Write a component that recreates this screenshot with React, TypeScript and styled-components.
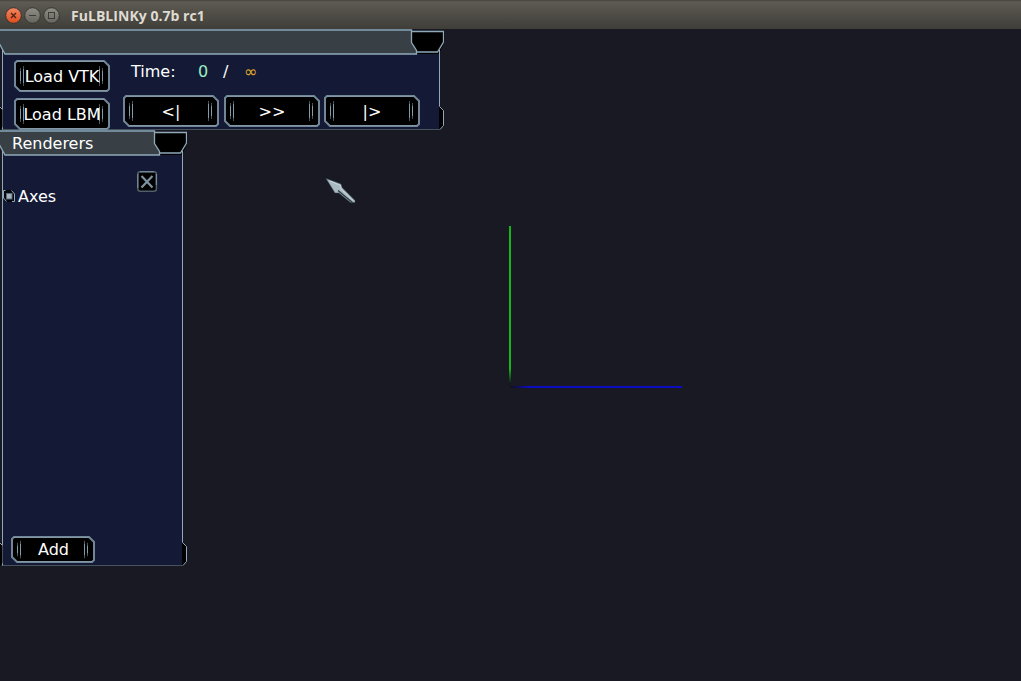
import React from "react";
import styled, { createGlobalStyle } from "styled-components";

const GlobalStyle = createGlobalStyle`
  *, *::before, *::after { box-sizing: border-box; }
  html, body { margin: 0; height: 100%; overflow: hidden; background: #191923; }
  body { font-family: "DejaVu Sans", sans-serif; font-size: 16px; color: #fff; }
`;

const LINE = "#8fa9b8";
const EDGE = "#718696";

const Window = styled.div`
  width: 1021px;
  height: 681px;
  display: flex;
  flex-direction: column;
  overflow: hidden;
`;

const WindowBar = styled.header`
  height: 29px;
  flex: none;
  display: flex;
  align-items: center;
  padding: 2px 0 0 5px;
  background: linear-gradient(#45443f 0, #5d5b52 2px, #55534b 30%, #3f3e39 100%);
`;

const WindowButtons = styled.div`
  display: flex;
  gap: 2px;
`;

const WindowTitle = styled.h1`
  margin: 0 0 0 11px;
  font: 700 14px/20px "Open Sans", sans-serif;
  letter-spacing: 0.04px;
  color: #dfdbd2;
`;

const Scene = styled.main`
  position: relative;
  flex: 1;
  background: #191923;
  overflow: hidden;
`;

const AxesDrawing = styled.svg`
  position: absolute;
  left: 500px;
  top: 190px;
`;

const Pointer = styled.svg`
  position: absolute;
  left: 325px;
  top: 149px;
`;

const PanelBox = styled.section<{ $top: number; $width: number; $height: number }>`
  position: absolute;
  left: 0;
  top: ${(p) => p.$top}px;
  width: ${(p) => p.$width}px;
  height: ${(p) => p.$height}px;
  display: flex;
  flex-direction: column;
`;

const PanelHead = styled.div`
  position: relative;
  height: 26px;
  flex: none;
  padding-left: 12px;
  line-height: 27px;
`;

const PanelBody = styled.div`
  position: relative;
  flex: 1;
  min-height: 0;
  margin: 0 4px 0 2px;
  border: solid ${LINE};
  border-width: 0 1px 1px;
  border-bottom-color: #46535d;
  background: #141a35;
`;

const Ornament = styled.svg`
  position: absolute;
  left: 0;
  top: 0;
`;

const CornerOrnament = styled.svg<{ $side: "left" | "right" }>`
  position: absolute;
  bottom: -1px;
  ${(p) => p.$side}: ${(p) => (p.$side === "left" ? -3 : -5)}px;
`;

const Label = styled.span`
  position: relative;
`;

const ButtonBox = styled.button<{ $width: number; $height: number; $padding: string }>`
  position: relative;
  flex: none;
  display: flex;
  align-items: center;
  justify-content: center;
  width: ${(p) => p.$width}px;
  height: ${(p) => p.$height}px;
  padding: ${(p) => p.$padding};
  border: 0;
  background: none;
  color: #fff;
  font: inherit;
  line-height: 20px;
  white-space: nowrap;
`;

const ControlLayout = styled.div`
  display: flex;
  gap: 13px;
  padding: 5px 0 0 11px;
`;

const LoadColumn = styled.div`
  display: flex;
  flex-direction: column;
  gap: 6px;
`;

const PlayColumn = styled.div`
  display: flex;
  flex-direction: column;
`;

const TimeRow = styled.div`
  display: flex;
  height: 35px;
  padding: 2px 0 0 8px;
  line-height: 20px;
`;

const TimeCell = styled.span<{ $width?: number; $color?: string }>`
  width: ${(p) => (p.$width ? `${p.$width}px` : "auto")};
  color: ${(p) => p.$color ?? "#fff"};
`;

const PlayRow = styled.div`
  display: grid;
  grid-template-columns: 101px 100px 96px;
`;

const RendererLayout = styled.div`
  height: 100%;
  display: flex;
  flex-direction: column;
  padding: 15px 25px 2px 0;
`;

const CloseRow = styled.div`
  display: flex;
  justify-content: flex-end;
  height: 15px;
`;

const RendererItem = styled.div`
  display: flex;
  align-items: center;
  gap: 3px;
  height: 20px;
`;

const AddRow = styled.div`
  margin-top: auto;
  padding-left: 8px;
`;

const CloseIcon = styled.svg`
  flex: none;
  overflow: visible;
`;

function OrnateButton({ width: w, height: h, padding = "1px 0 0", children }: {
  width: number;
  height: number;
  padding?: string;
  children: React.ReactNode;
}) {
  const mid = h / 2;
  const grips = [
    { x: 6.5, r: h / 4 - 1 },
    { x: 9.5, r: h / 4 + 1 },
    { x: w - 10.5, r: h / 4 + 1 },
    { x: w - 7.5, r: h / 4 - 1 },
  ];
  return (
    <ButtonBox $width={w} $height={h} $padding={padding}>
      <Ornament width={w} height={h}>
        <path
          d={`M3 1H${w - 6}L${w - 1} 6V${h - 3}L${w - 3} ${h - 1}H6L1 ${h - 6}V3Z`}
          fill="#000"
          stroke={EDGE}
          strokeWidth="2"
        />
        <path d={`M3 1.5H${w - 6}M6 ${h - 1.5}H${w - 3}`} stroke="#8398a6" />
        {grips.map(({ x, r }) => (
          <g key={x} stroke="#9db9ca">
            <path d={`M${x} ${mid - r - 1}V${mid + r + 1}`} opacity=".45" />
            <path d={`M${x} ${mid - r + 2}V${mid + r - 2}`} opacity=".7" />
          </g>
        ))}
      </Ornament>
      <Label>{children}</Label>
    </ButtonBox>
  );
}

function Panel({ top, width, height, title, children }: {
  top: number;
  width: number;
  height: number;
  title?: string;
  children: React.ReactNode;
}) {
  const t = width - 33;
  return (
    <PanelBox $top={top} $width={width} $height={height}>
      <PanelHead>
        <Ornament width={width} height="26">
          <path d={`M2 20H${width - 4}V26H2Z`} fill="#141a35" />
          <path d="M2.5 20V26" stroke={LINE} />
          <path d={`M${t} 2H${width}V14L${width - 5} 25H${t}Z`} fill="#000" />
          <path d={`M${width - 4.5} 21V26`} stroke={LINE} />
          <path
            d={`M${t} 2.5H${width - 0.5}V13L${width - 6.5} 23H${t + 4}`}
            fill="none"
            stroke={LINE}
            strokeWidth="1.3"
          />
          <path d={`M-2 1H${t + 0.5}V13.5L${t + 5.5} 21.5V25H5L-1 14Z`} fill="#384046" stroke={LINE} strokeWidth="1.3" />
          <path d={`M0 1H${t}`} stroke="#718b9a" strokeWidth="2" />
        </Ornament>
        <Label>{title}</Label>
      </PanelHead>
      <PanelBody>
        {children}
        <CornerOrnament $side="left" width="3" height="24">
          <path d="M0 0L2.5 3V21L0 24Z" fill="#000" />
          <path d="M0 1L2.5 3.5" stroke={LINE} />
        </CornerOrnament>
        <CornerOrnament $side="right" width="5" height="24">
          <path d="M0 0L4.5 4V20L1 23.5H0Z" fill="#000" />
          <path d="M.5 .5L4.5 4.5V19.5L1 23.5" fill="none" stroke={LINE} />
        </CornerOrnament>
      </PanelBody>
    </PanelBox>
  );
}

function TitleButton({ kind }: { kind: "close" | "minimize" | "maximize" }) {
  const close = kind === "close";
  const id = `${kind}-fill`;
  return (
    <svg width="17" height="17" role="img" aria-label={kind}>
      <defs>
        <linearGradient id={id} x2="0" y2="1">
          <stop stopColor={close ? "#f58662" : "#918f87"} />
          <stop offset="1" stopColor={close ? "#df4d1c" : "#65645d"} />
        </linearGradient>
      </defs>
      <circle cx="8.5" cy="8.5" r="7.8" fill={`url(#${id})`} stroke="#33322e" strokeWidth=".9" />
      {close && <path d="M6 6L11 11M11 6L6 11" stroke="#4a2114" strokeWidth="1.3" />}
      {kind === "minimize" && <path d="M5 8.5H12" stroke="#3c3b37" />}
      {kind === "maximize" && <rect x="5.5" y="5.5" width="6" height="6" fill="none" stroke="#3c3b37" />}
    </svg>
  );
}

function CloseBox() {
  return (
    <CloseIcon width="20" height="22">
      <rect x=".8" y=".8" width="18.6" height="19.4" rx="2.5" fill="#000" stroke="#505e69" strokeWidth="1.5" />
      <path d="M3 .8H17M.8 3V17M19.3 3V14" stroke="#8096a4" />
      <path d="M4.5 5L15.5 16.5M15.5 5L4.5 16.5" stroke="#7d95a4" strokeWidth="2.1" />
    </CloseIcon>
  );
}

function RadioMark() {
  return (
    <svg width="12" height="12">
      <path d="M2 0H9L11 3V12H3L1 9V1Z" fill="#05070d" />
      <path d="M2.5 .5H.5V8L3.5 11.5M9 11.5H11.5V4L8.5 .5" fill="none" stroke={LINE} />
      <rect x="3.5" y="3.5" width="5.5" height="5.5" fill="#a5b2bb" stroke="#586b7a" />
    </svg>
  );
}

export default function App() {
  return (
    <Window>
      <GlobalStyle />
      <WindowBar>
        <WindowButtons>
          <TitleButton kind="close" />
          <TitleButton kind="minimize" />
          <TitleButton kind="maximize" />
        </WindowButtons>
        <WindowTitle>FuLBLINKy 0.7b rc1</WindowTitle>
      </WindowBar>
      <Scene>
        <AxesDrawing width="190" height="180">
          <defs>
            <linearGradient id="green" gradientUnits="userSpaceOnUse" x1="0" y1="0" x2="0" y2="168">
              <stop offset=".89" stopColor="#16b61b" />
              <stop offset=".98" stopColor="#10181a" />
            </linearGradient>
            <linearGradient id="blue">
              <stop stopColor="#10101a" />
              <stop offset=".11" stopColor="#0c0cc0" />
            </linearGradient>
          </defs>
          <rect x="10" y="167" width="172" height="2" fill="url(#blue)" />
          <rect x="9" y="7" width="2" height="160" fill="url(#green)" />
        </AxesDrawing>
        <Panel top={0} width={444} height={101}>
          <ControlLayout>
            <LoadColumn>
              <OrnateButton width={96} height={32}>Load VTK</OrnateButton>
              <OrnateButton width={96} height={32}>Load LBM</OrnateButton>
            </LoadColumn>
            <PlayColumn>
              <TimeRow>
                <TimeCell $width={67}>Time:</TimeCell>
                <TimeCell $width={25} $color="#9af0c6">0</TimeCell>
                <TimeCell $width={21}>/</TimeCell>
                <TimeCell $color="#e0a92e">∞</TimeCell>
              </TimeRow>
              <PlayRow>
                <OrnateButton width={96} height={32}>&lt;|</OrnateButton>
                <OrnateButton width={96} height={32}>&gt;&gt;</OrnateButton>
                <OrnateButton width={96} height={32}>|&gt;</OrnateButton>
              </PlayRow>
            </PlayColumn>
          </ControlLayout>
        </Panel>
        <Panel top={101} width={187} height={436} title="Renderers">
          <RendererLayout>
            <CloseRow>
              <CloseBox />
            </CloseRow>
            <RendererItem>
              <RadioMark />
              Axes
            </RendererItem>
            <AddRow>
              <OrnateButton width={84} height={27} padding="0 0 0 1px">Add</OrnateButton>
            </AddRow>
          </RendererLayout>
        </Panel>
        <Pointer width="32" height="26">
          <path d="M1 .5L16 6L17 9.5L30 22.5V24.5H25.5L14 15L10 15Z" fill="#a9bac2" stroke="#38474f" strokeWidth=".5" />
          <path d="M5 3L15.5 7.5L16 11L28 22.5" fill="none" stroke="#c5d6dd" />
          <path d="M13 12.5L27.5 24.5" stroke="#2f3d45" strokeWidth="1.4" />
        </Pointer>
      </Scene>
    </Window>
  );
}
